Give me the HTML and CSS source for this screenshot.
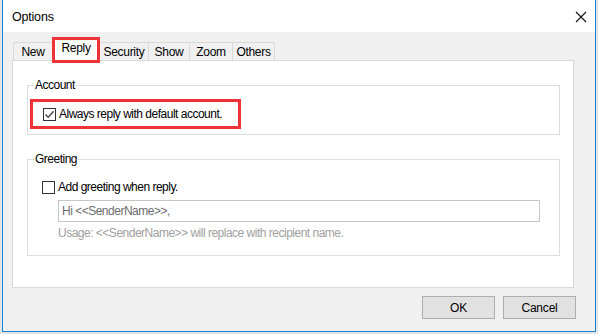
FILE: index.html
```html
<!DOCTYPE html>
<html lang="en">
<head>
    <meta charset="UTF-8">
    <title>Options</title>
    <link rel="stylesheet" href="styles.css">
</head>
<body>
    <div class="window">
        <div class="titlebar">
            <span class="title">Options</span>
            <svg class="close" width="12" height="12" viewBox="0 0 12 12">
                <path d="M1 1 L11 11 M11 1 L1 11" stroke="#111" stroke-width="1.1" fill="none"/>
            </svg>
        </div>

        <div class="client">
            <div class="tabs">
                <div class="tab tab-new">New</div>
                <div class="tab tab-reply active">Reply</div>
                <div class="tab tab-security">Security</div>
                <div class="tab tab-show">Show</div>
                <div class="tab tab-zoom">Zoom</div>
                <div class="tab tab-others">Others</div>
            </div>

            <div class="pane">
                <fieldset class="group group-account">
                    <legend>Account</legend>
                    <div class="highlight">
                        <label class="check-row">
                            <span class="checkbox checked">
                                <svg width="11" height="11" viewBox="0 0 11 11">
                                    <path d="M1.5 5.5 L4.2 8.3 L9.6 2.2" stroke="#444" stroke-width="1.3" fill="none"/>
                                </svg>
                            </span>
                            <span>Always reply with default account.</span>
                        </label>
                    </div>
                </fieldset>

                <fieldset class="group group-greeting">
                    <legend>Greeting</legend>
                    <label class="check-row">
                        <span class="checkbox"></span>
                        <span>Add greeting when reply.</span>
                    </label>
                    <div class="text-input">Hi &lt;&lt;SenderName&gt;&gt;,</div>
                    <div class="hint">Usage: &lt;&lt;SenderName&gt;&gt; will replace with recipient name.</div>
                </fieldset>
            </div>

            <div class="buttons">
                <button class="btn">OK</button>
                <button class="btn">Cancel</button>
            </div>
        </div>
    </div>
</body>
</html>
```

FILE: styles.css
```css
:root {
    --win-blue: #1883d7;
    --face: #f0f0f0;
    --line: #d9d9d9;
    --red: #ee3338;
}

* {
    margin: 0;
    padding: 0;
    box-sizing: border-box;
}

body {
    margin: 0;
    background-color: #e4e4e4;
    font-family: 'Liberation Sans', Arial, sans-serif;
    font-size: 12px;
    letter-spacing: -0.5px;
    white-space: nowrap;
    color: #000;
}

.window {
    margin-left: 2px;
    width: 594px;
    height: 332px;
    border: 1px solid var(--win-blue);
    border-top: none;
    background-color: var(--face);
    display: flex;
    flex-direction: column;
}

.titlebar {
    height: 32px;
    background-color: #fff;
    display: flex;
    align-items: center;
    justify-content: space-between;
    padding: 0 8px 0 9px;
}

.title {
    font-size: 12.5px;
    letter-spacing: -0.2px;
    line-height: 16px;
    margin-top: 1px;
}

.close {
    margin-top: 1px;
}

.client {
    flex: 1;
    padding: 5px 20px 0 9px;
}

.tabs {
    display: flex;
    align-items: flex-end;
    height: 23px;
    margin-left: 1px;
    position: relative;
    z-index: 1;
}

.tab {
    height: 18px;
    border: 1px solid var(--line);
    border-right: none;
    border-bottom: none;
    background-color: var(--face);
    display: flex;
    align-items: center;
    justify-content: center;
    line-height: 16px;
    letter-spacing: -0.3px;
}

.tab-new { width: 39px; }
.tab-security { width: 48px; border-left: none; }
.tab-show { width: 41px; }
.tab-zoom { width: 43px; }
.tab-others { width: 43px; border-right: 1px solid var(--line); }

.tab.active {
    width: 48px;
    height: 26px;
    margin-bottom: -3px;
    border: 3px solid var(--red);
    background-color: #fff;
    padding-bottom: 4px;
}

.pane {
    width: 562px;
    height: 228px;
    border: 1px solid var(--line);
    background-color: #fff;
    padding: 16px 13px 0 14px;
}

.group {
    border: 1px solid #dcdcdc;
    margin: 0;
    padding: 0;
    min-width: 0;
}

.group legend {
    margin-left: 6px;
    padding: 0 1px;
    line-height: 16px;
}

.group-account {
    padding-bottom: 5px;
}

.highlight {
    margin: 6px 0 0 2px;
    width: 211px;
    height: 30px;
    border: 3px solid var(--red);
    display: flex;
    align-items: center;
    padding-left: 10px;
}

.check-row {
    display: flex;
    align-items: center;
    gap: 3px;
    line-height: 16px;
}

.checkbox {
    width: 13px;
    height: 13px;
    border: 1px solid #333;
    background-color: #fff;
    display: flex;
    align-items: center;
    justify-content: center;
}

.group-greeting {
    margin-top: 16px;
    padding: 12px 0 14px 0;
}

.group-greeting .check-row {
    margin-left: 14px;
}

.group-greeting .text-input {
    margin: 5px 0 0 30px;
    width: 482px;
    height: 22px;
    border: 1px solid #c6c6c6;
    padding-left: 3px;
    color: #6d6d6d;
    line-height: 20px;
}

.hint {
    margin: 3px 0 0 30px;
    color: #a0a0a0;
    line-height: 16px;
}

.buttons {
    display: flex;
    justify-content: flex-end;
    gap: 8px;
    margin-top: 8px;
    margin-right: -1px;
}

.btn {
    width: 73px;
    height: 23px;
    border: 1px solid #adadad;
    background-color: #e1e1e1;
    font-family: 'Liberation Sans', Arial, sans-serif;
    font-size: 12px;
    letter-spacing: -0.2px;
    color: #000;
}
```
